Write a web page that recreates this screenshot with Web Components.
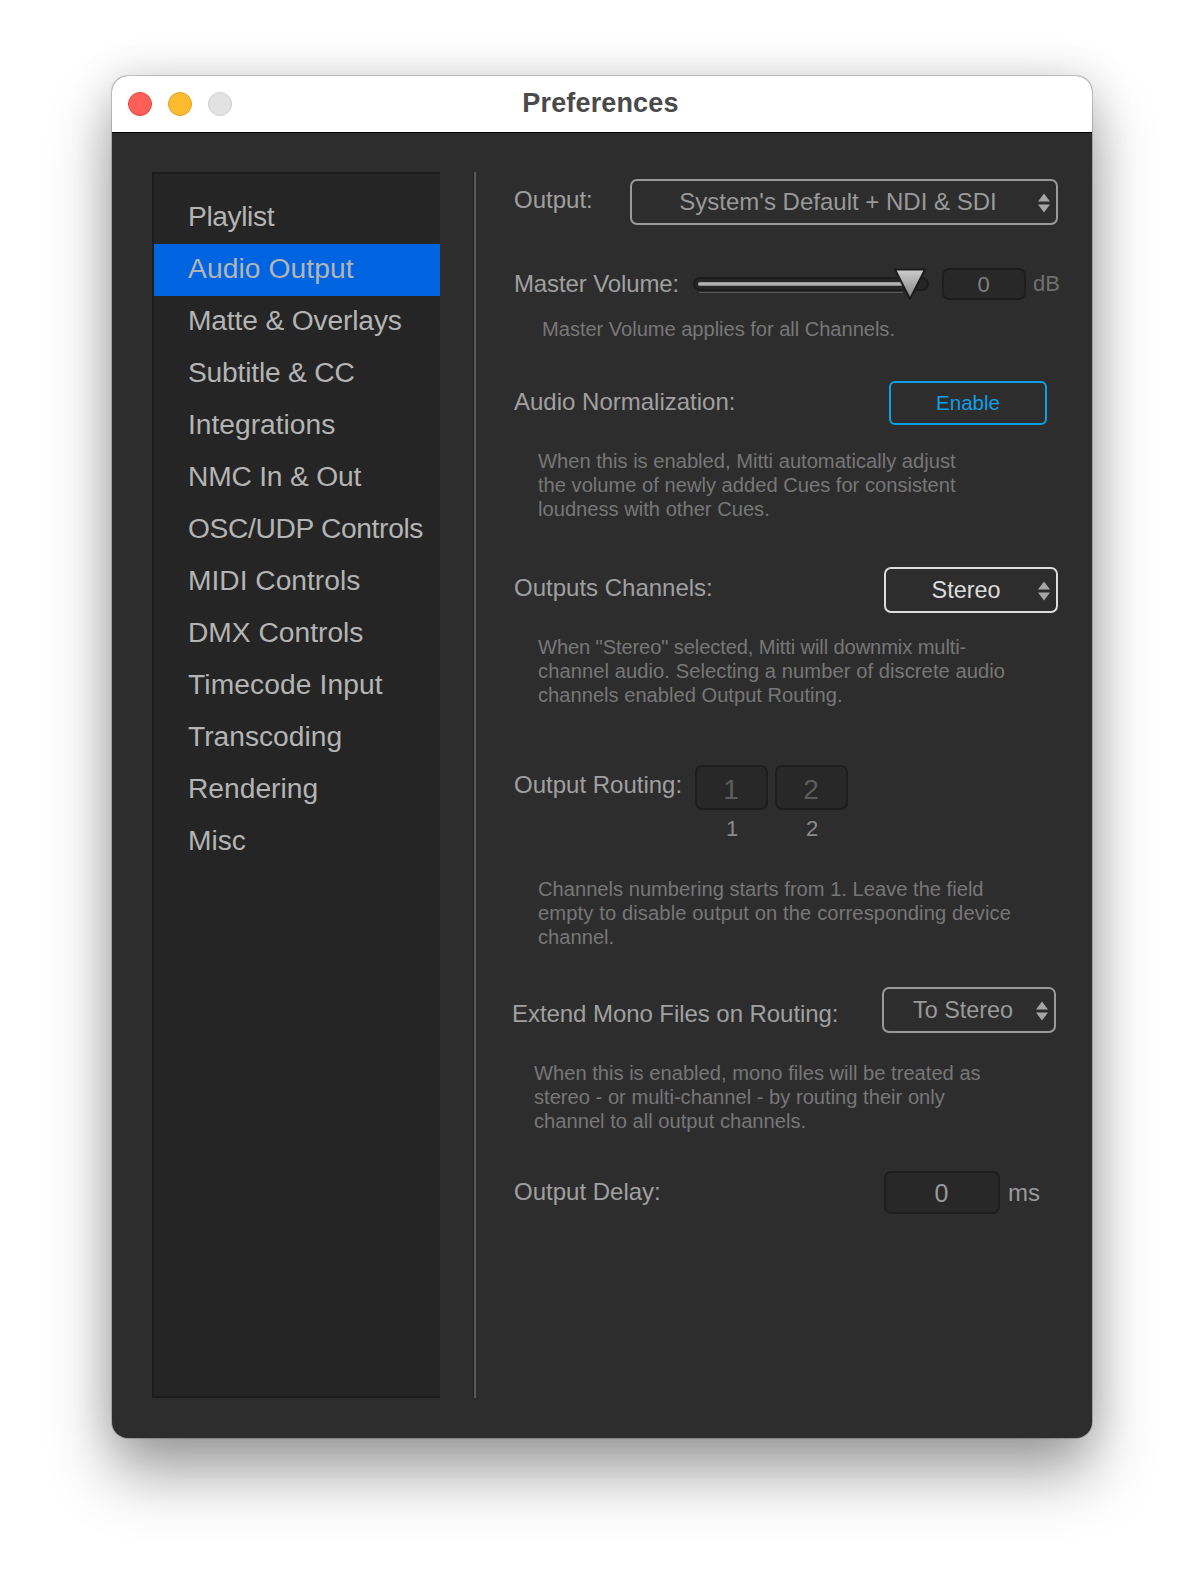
<!DOCTYPE html>
<html>
<head>
<meta charset="utf-8">
<title>Preferences</title>
<style>
  html, body { margin: 0; background: #fff; }
  body { padding: 76px 112px 148px; font-family: "Liberation Sans", Arial, sans-serif; }
</style>
</head>
<body>
<pref-window title-text="Preferences">
  <pref-sidebar slot="side">
    <pref-item style="letter-spacing:-.4px">Playlist</pref-item>
    <pref-item selected style="letter-spacing:.1px">Audio Output</pref-item>
    <pref-item style="letter-spacing:-.15px">Matte &amp; Overlays</pref-item>
    <pref-item style="letter-spacing:-.2px">Subtitle &amp; CC</pref-item>
    <pref-item>Integrations</pref-item>
    <pref-item style="letter-spacing:-.2px">NMC In &amp; Out</pref-item>
    <pref-item style="letter-spacing:-.35px">OSC/UDP Controls</pref-item>
    <pref-item>MIDI Controls</pref-item>
    <pref-item>DMX Controls</pref-item>
    <pref-item style="letter-spacing:.1px">Timecode Input</pref-item>
    <pref-item>Transcoding</pref-item>
    <pref-item>Rendering</pref-item>
    <pref-item>Misc</pref-item>
  </pref-sidebar>

  <pref-row style="margin-top:7px;height:46px">
    <pref-label style="width:116px;top:-2px">Output:</pref-label>
    <pref-select style="width:428px;--tone:#999">System's Default + NDI &amp; SDI</pref-select>
  </pref-row>

  <pref-row style="margin-top:43px;height:32px">
    <pref-label style="width:179px;letter-spacing:-.12px">Master Volume:</pref-label>
    <volume-slider></volume-slider>
    <pref-field style="width:84px;margin-left:13px">0</pref-field>
    <pref-unit style="margin-left:7px;color:#6f6f6f">dB</pref-unit>
  </pref-row>
  <pref-note style="margin-top:17px;margin-left:28px;letter-spacing:-.05px">Master Volume applies for all Channels.</pref-note>

  <pref-row style="margin-top:40px;height:44px">
    <pref-label style="top:-1px">Audio Normalization:</pref-label>
    <pref-button style="margin-left:auto;margin-right:11px">Enable</pref-button>
  </pref-row>
  <pref-note style="margin-top:24px;margin-left:24px">When this is enabled, Mitti automatically adjust<br>the volume of newly added Cues for consistent<br>loudness with other Cues.</pref-note>

  <pref-row style="margin-top:46px;height:46px">
    <pref-label style="top:-2px">Outputs Channels:</pref-label>
    <pref-select style="width:174px;margin-left:auto;padding-right:10px;--tone:#dcdcdc;--fs:23.4px">Stereo</pref-select>
  </pref-row>
  <pref-note style="margin-top:22px;margin-left:24px"><span style="letter-spacing:-.12px">When "Stereo" selected, Mitti will downmix multi-</span><br><span style="letter-spacing:.07px">channel audio. Selecting a number of discrete audio</span><br>channels enabled Output Routing.</pref-note>

  <pref-row style="margin-top:58px;height:45px">
    <pref-label style="width:181px;top:-3px">Output Routing:</pref-label>
    <pref-field style="width:73px;--num:#5c5c5c;--size:28px;--drop:5px">1</pref-field>
    <pref-field style="width:73px;margin-left:7px;--num:#5c5c5c;--size:28px;--drop:5px">2</pref-field>
  </pref-row>
  <pref-row style="margin-top:7px;height:24px;padding-left:182px">
    <pref-unit style="width:72px;text-align:center;color:#8a8a8a">1</pref-unit>
    <pref-unit style="width:72px;margin-left:8px;text-align:center;color:#8a8a8a">2</pref-unit>
  </pref-row>
  <pref-note style="margin-top:36px;margin-left:24px">Channels numbering starts from 1. Leave the field<br><span style="letter-spacing:.12px">empty to disable output on the corresponding device</span><br>channel.</pref-note>

  <pref-row style="margin-top:38px;height:46px">
    <pref-label style="top:4px;left:-2px;letter-spacing:-.06px">Extend Mono Files on Routing:</pref-label>
    <pref-select style="width:174px;margin-left:auto;margin-right:2px;--tone:#999;--fs:23.4px">To Stereo</pref-select>
  </pref-row>
  <pref-note style="margin-top:28px;margin-left:20px">When this is enabled, mono files will be treated as<br>stereo - or multi-channel - by routing their only<br>channel to all output channels.</pref-note>

  <pref-row style="margin-top:38px;height:43px">
    <pref-label style="top:-1px">Output Delay:</pref-label>
    <pref-field style="width:116px;margin-left:auto;--num:#999;--size:25px">0</pref-field>
    <pref-unit style="margin-left:8px;margin-right:18px;color:#999;font-size:24px">ms</pref-unit>
  </pref-row>
</pref-window>

<script>
function defineSimple(name, css, html) {
  const template = document.createElement("template");
  template.innerHTML = `<style>${css}</style>${html}`;
  customElements.define(name, class extends HTMLElement {
    constructor() {
      super();
      this.attachShadow({ mode: "open" }).appendChild(template.content.cloneNode(true));
    }
  });
}

const windowTemplate = document.createElement("template");
windowTemplate.innerHTML = `
  <style>
    :host {
      display: block;
      width: 980px;
      height: 1362px;
      border-radius: 16px;
      background: #2d2d2d;
      box-shadow: 0 0 0 1px rgba(0,0,0,.18), 0 36px 62px rgba(0,0,0,.36), 0 0 44px rgba(0,0,0,.14);
    }
    .titlebar {
      position: relative;
      display: flex;
      align-items: center;
      justify-content: center;
      height: 57px;
      box-sizing: border-box;
      padding-right: 3px;
      padding-bottom: 1px;
      background: #fff;
      border-radius: 16px 16px 0 0;
      border-bottom: 1px solid #000;
      font: bold 27px "Liberation Sans", Arial, sans-serif;
      letter-spacing: .15px;
      color: #4a4a4a;
    }
    .lights {
      position: absolute;
      left: 16px;
      top: 16px;
      display: flex;
      gap: 16px;
    }
    .lights i {
      width: 24px;
      height: 24px;
      box-sizing: border-box;
      border-radius: 50%;
      border: 1px solid;
    }
    .body {
      display: flex;
      height: 1305px;
      box-sizing: border-box;
      padding: 39px 34px 40px 40px;
    }
    .rule {
      flex: none;
      width: 3px;
      margin-left: 33px;
      box-sizing: border-box;
      background: #5a5a5a;
      border-left: 1px solid #202020;
    }
    .panel {
      flex: 1;
      min-width: 0;
      padding-left: 38px;
      display: flex;
      flex-direction: column;
    }
  </style>
  <div class="titlebar">
    <div class="lights">
      <i style="background:#ff5f57;border-color:#e0443e"></i>
      <i style="background:#febc2e;border-color:#dfa023"></i>
      <i style="background:#e2e2e2;border-color:#cfcfcf"></i>
    </div>
    <span class="title"></span>
  </div>
  <div class="body">
    <slot name="side"></slot>
    <div class="rule"></div>
    <div class="panel"><slot></slot></div>
  </div>
`;

class PrefWindow extends HTMLElement {
  constructor() {
    super();
    this.attachShadow({ mode: "open" }).appendChild(windowTemplate.content.cloneNode(true));
    this.shadowRoot.querySelector(".title").textContent = this.getAttribute("title-text");
  }
}
customElements.define("pref-window", PrefWindow);

defineSimple("pref-sidebar", `
  :host {
    display: block;
    width: 288px;
    height: 100%;
    box-sizing: border-box;
    padding-top: 18px;
    background: #252525;
    border: solid #1c1c1c;
    border-width: 2px 0 2px 2px;
  }
`, `<slot></slot>`);

defineSimple("pref-item", `
  :host {
    display: block;
    height: 52px;
    line-height: 48px;
    padding-left: 34px;
    font-size: 28.2px;
    color: #b4b4b4;
    white-space: nowrap;
  }
  :host([selected]) { background: #0064e1; }
`, `<slot></slot>`);

defineSimple("pref-row", `
  :host {
    display: flex;
    align-items: center;
    flex: none;
  }
`, `<slot></slot>`);

defineSimple("pref-label", `
  :host {
    display: block;
    position: relative;
    flex: none;
    font-size: 24px;
    color: #a0a0a0;
    white-space: nowrap;
  }
`, `<slot></slot>`);

defineSimple("pref-unit", `
  :host {
    display: block;
    flex: none;
    font-size: 22px;
    line-height: 24px;
  }
`, `<slot></slot>`);

defineSimple("pref-note", `
  :host {
    display: block;
    flex: none;
    font-size: 20.15px;
    line-height: 24px;
    color: #777;
    white-space: nowrap;
  }
`, `<slot></slot>`);

defineSimple("pref-select", `
  :host {
    display: block;
    position: relative;
    flex: none;
    height: 46px;
    box-sizing: border-box;
    border: 2px solid var(--tone);
    border-radius: 7px;
    padding-right: 12px;
    color: var(--tone);
    font-size: var(--fs, 24px);
    line-height: 42px;
    text-align: center;
    white-space: nowrap;
  }
  svg {
    position: absolute;
    right: 5px;
    top: 12px;
    width: 14px;
    height: 20px;
    fill: #a5a5a5;
  }
`, `<slot></slot><svg viewBox="0 0 14 20"><path d="M7 0.5 13 8.5H1Z"/><path d="M7 19.5 1 11.5H13Z"/></svg>`);

defineSimple("pref-button", `
  :host {
    display: block;
    flex: none;
    width: 158px;
    height: 44px;
    box-sizing: border-box;
    border: 2px solid #0e9fe6;
    border-radius: 6px;
    color: #0e9fe6;
    font-size: 20.5px;
    line-height: 40px;
    text-align: center;
  }
`, `<slot></slot>`);

defineSimple("pref-field", `
  :host {
    flex: none;
    height: 100%;
    box-sizing: border-box;
    border: 2px solid #1e1e1e;
    border-radius: 7px;
    background: #282828;
    color: var(--num, #808080);
    font-size: var(--size, 22px);
    text-align: center;
    display: flex;
    align-items: center;
    justify-content: center;
    padding-top: var(--drop, 1px);
    padding-right: 1px;
  }
`, `<slot></slot>`);

defineSimple("volume-slider", `
  :host {
    display: block;
    position: relative;
    flex: none;
    width: 236px;
    height: 14px;
    box-sizing: border-box;
    border: 2px solid #1c1c1c;
    border-radius: 7px;
    background: #262626;
  }
  :host::after {
    content: "";
    position: absolute;
    left: 4px;
    right: 24px;
    top: 13px;
    height: 1px;
    background: #5a5a5a;
  }
  .fill {
    position: absolute;
    left: 3px;
    top: 3px;
    width: 205px;
    height: 4px;
    border-radius: 2px;
    background: linear-gradient(#8c8c8c, #bdbdbd 50%, #808080);
  }
  svg {
    position: absolute;
    left: 199px;
    top: -11px;
    width: 32px;
    height: 33px;
    overflow: visible;
  }
`, `
  <div class="fill"></div>
  <svg viewBox="0 0 32 33">
    <defs>
      <linearGradient id="thumb" x1="0" y1="0" x2="0" y2="1">
        <stop offset="0" stop-color="#cdcdcd"/>
        <stop offset="1" stop-color="#858585"/>
      </linearGradient>
    </defs>
    <path d="M1 1.5H31L16 31Z" fill="url(#thumb)" stroke="#1c1c1c" stroke-width="2" stroke-linejoin="round"/>
  </svg>
`);
</script>
</body>
</html>
